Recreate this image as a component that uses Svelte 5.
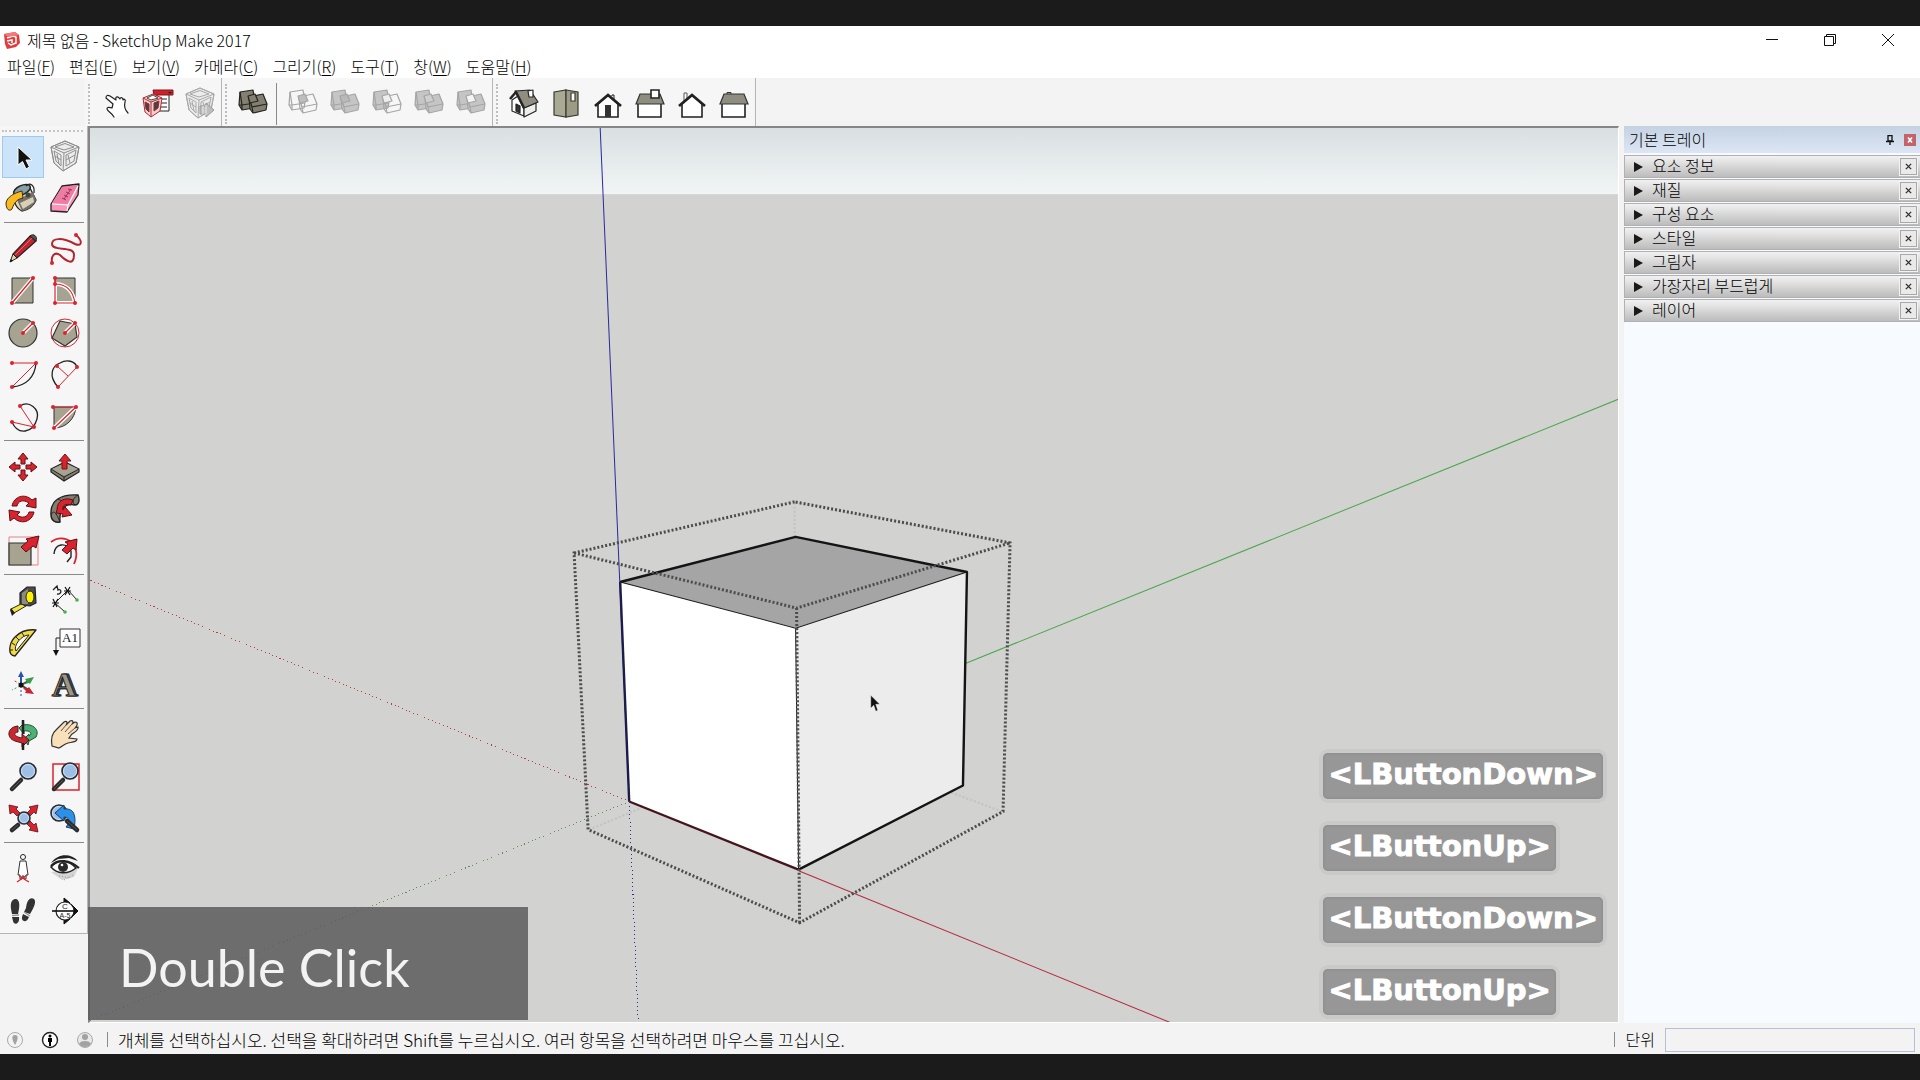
<script lang="ts">
	type Tool = { id: string; label: string; off?: boolean };

	const menus = [
		{ label: '파일', key: 'F' },
		{ label: '편집', key: 'E' },
		{ label: '보기', key: 'V' },
		{ label: '카메라', key: 'C' },
		{ label: '그리기', key: 'R' },
		{ label: '도구', key: 'T' },
		{ label: '창', key: 'W' },
		{ label: '도움말', key: 'H' },
	];

	const bars: Tool[][][] = [
		[[
			{ id: 'interact', label: '상호 작용' },
			{ id: 'options',  label: '구성 요소 옵션' },
			{ id: 'attrs',    label: '구성 요소 속성', off: true },
		]],
		[
			[{ id: 'shell', label: '외부 셸' }],
			[
				{ id: 'intersect', label: '교차' },
				{ id: 'union',     label: '결합' },
				{ id: 'subtract',  label: '빼기' },
				{ id: 'trim',      label: '트림' },
				{ id: 'split',     label: '분할' },
			],
		],
		[[
			{ id: 'iso',   label: '등각' },
			{ id: 'top',   label: '맨 위' },
			{ id: 'front', label: '앞' },
			{ id: 'right', label: '오른쪽' },
			{ id: 'back',  label: '뒤' },
			{ id: 'left',  label: '왼쪽' },
		]],
	];

	const palette: Tool[][] = [
		[
			{ id: 'select', label: '선택' },        { id: 'component', label: '구성 요소 만들기' },
			{ id: 'paint',  label: '페인트 통' },   { id: 'eraser',    label: '지우개' },
		],
		[
			{ id: 'line',    label: '선' },         { id: 'freehand', label: '프리핸드' },
			{ id: 'rect',    label: '직사각형' },   { id: 'rotrect',  label: '회전된 직사각형' },
			{ id: 'circle',  label: '원' },         { id: 'polygon',  label: '다각형' },
			{ id: 'arc',     label: '호' },         { id: 'arc2',     label: '2점 호' },
			{ id: 'arc3',    label: '3점 호' },     { id: 'pie',      label: '파이' },
		],
		[
			{ id: 'move',   label: '이동' },        { id: 'pushpull', label: '밀기/끌기' },
			{ id: 'rotate', label: '회전' },        { id: 'follow',   label: '따라가기' },
			{ id: 'scale',  label: '배율' },        { id: 'offset',   label: '오프셋' },
		],
		[
			{ id: 'tape',       label: '줄자' },    { id: 'dimension', label: '치수' },
			{ id: 'protractor', label: '각도기' },  { id: 'text',      label: '텍스트' },
			{ id: 'axes',       label: '축' },      { id: 'text3d',    label: '3D 텍스트' },
		],
		[
			{ id: 'orbit',   label: '궤도' },       { id: 'pan',        label: '이동 보기' },
			{ id: 'zoom',    label: '확대/축소' },  { id: 'zoomwindow', label: '창 확대/축소' },
			{ id: 'extents', label: '범위 확대' },  { id: 'previous',   label: '이전' },
		],
		[
			{ id: 'camera', label: '카메라 배치' }, { id: 'look',    label: '둘러보기' },
			{ id: 'walk',   label: '걷기' },        { id: 'section', label: '단면' },
		],
	];

	const trays = ['요소 정보', '재질', '구성 요소', '스타일', '그림자', '가장자리 부드럽게', '레이어'];
	const keys = ['LButtonDown', 'LButtonUp', 'LButtonDown', 'LButtonUp'];

	let active = $state('select');
	let unit = $state('');

	const red = '#d9232e';
	const dot = (x: number, y: number) => `<circle cx="${x}" cy="${y}" r="2" fill="${red}"/>`;

	// two overlapping solids, shared by every boolean tool
	const solids = (fill: string, line: string, a = true, b = true, mid = '') => `
		<g stroke="${line}" stroke-width="1.2" stroke-linejoin="round">
			<path fill="${a ? fill : 'none'}" d="M8 9 21 7 23 19 22 25 10 27 7 22Z"/>
			<path fill="none" d="M8 9 10 22 7 22M10 22 23 20M10 22V27"/>
			<path fill="${b ? fill : 'none'}" d="M17 14 31 11 35 21 34 27 21 30 18 26Z"/>
			<path fill="none" d="M17 14 20 24 35 21M20 24 21 30"/>
			<path fill="${mid || 'none'}" d="M16 13 23 11 26 18 18 20Z"/>
		</g>`;

	const lens = (x: number, y: number, r: number) =>
		`<circle cx="${x}" cy="${y}" r="${r}" fill="#9dbfe6" stroke="#2b2b2f" stroke-width="1.6"/>
		<circle cx="${x}" cy="${y}" r="${r - 1.5}" fill="none" stroke="#c9def4" stroke-width="1"/>`;

	const handle = (d: string) =>
		`<path d="${d}" stroke="#2b2b2b" stroke-width="4.5" stroke-linecap="round"/><path d="${d}" stroke="#555" stroke-width="1"/>`;

	const frame = `
		<path d="M7 11 21 5 35 11 32 27 19 35 10 27Z" fill="#ececec"/>
		<path d="M7 11 21 5 35 11 20 17ZM11 11 21 7.500 30 11 20 14ZM7 11 10 27 19 35 20 17M35 11 32 27 19 35M10 15 17 19V30L12 25ZM22 19 32 14 30 25 22 30ZM13 18 15 28M11 20 17 24M24 19 26 27M22 24 31 19"/>`;

	const icons: Record<string, string> = {
		interact: `<path d="M19 34C17 30 13 29 12 26 12 24 14 24 17 25L18 21 11 15C11 12 13 12 15 13L21 17C20 13 23 13 25 16 25 14 28 14 28 17 29 15 31 17 30 19 29 23 30 27 33 30" fill="#fff" stroke="#222" stroke-width="1.2" stroke-linejoin="round" stroke-linecap="round"/>`,
		options: `<path d="M20 9H32V28H22Z" fill="#fff" stroke="#222"/><path d="M16 7H36V12H17Z" fill="#c9222d" stroke="#8b1219"/><path d="M31 9H35L33 11Z" fill="#222"/><path d="M24 16H30M24 20H30M24 24H30" stroke="#222"/>
			<path d="M6 15 16 11 25 15 23 28 14 34 8 29Z" fill="#f2d0d0" stroke="#b92832"/><path d="M6 15 14 19 25 15M14 19 14 34" stroke="#b92832"/><path d="M8 19 12 21V29L9 26ZM17 20 22 18 21 25 17 28Z" fill="#444" stroke="#8f2a31"/><path d="M10 15 16 12 21 15 14 17Z" fill="#fff" stroke="#444"/>`,
		attrs: `<g fill="none" stroke="#a9a9a9">${frame}</g><path d="M21 23H27V20L35 27 27 34V31H21Z" fill="#bdbdbd" stroke="#999"/><path d="M24 23V31M27 22V32" stroke="#eee"/>`,
		shell: solids('#848071', '#24241f', true, true, '#848071'),
		intersect: solids('#c5c5c5', '#a5a5a5', false, false, '#bdbdbd'),
		union: solids('#c5c5c5', '#a5a5a5', true, true, '#b9b9b9'),
		subtract: solids('#c5c5c5', '#a5a5a5', true, false, '#eee'),
		trim: solids('#c5c5c5', '#a5a5a5', true, true, '#cfcfcf'),
		split: solids('#c5c5c5', '#a5a5a5', true, true, '#f4f4f4'),
		iso: `<g stroke="#252525" stroke-width="1.2" stroke-linejoin="round"><path d="M9 17 15 13 21 26V33L9 28Z" fill="#fff"/><path d="M21 25 33 20V28L21 34Z" fill="#eee"/><path d="M12 8 27 7 35 19 21 25Z" fill="#8e8d7f"/><path d="M7 16 13 9 21 25" fill="none" stroke-width="2.600"/><path d="M13 21 17 23V30L13 28Z" fill="#333"/><path d="M25 8 30 7V14L26 14Z" fill="#fff"/></g>`,
		top: `<g stroke="#3a3a32" stroke-width="1.2"><path d="M9 9 21 7V34L9 32Z" fill="#aaa993"/><path d="M21 7 33 9V32L21 34Z" fill="#9c9b85"/><path d="M26 10 30 10V18L26 18Z" fill="#fff"/></g>`,
		front: `<path d="M11 21V34H31V21L21 12Z" fill="#fff" stroke="#222" stroke-width="1.6"/><path d="M8 23 21 12 34 23" fill="none" stroke="#222" stroke-width="2.800"/><path d="M18 22H24V34H18Z" fill="#333"/><path d="M25 13V12H27V16" stroke="#222" fill="none"/>`,
		right: `<path d="M9 20H32V34H9Z" fill="#fff" stroke="#222" stroke-width="1.6"/><path d="M11 11H31L35 21H7Z" fill="#8e8d7f" stroke="#333" stroke-width="1.2"/><path d="M22 7H30V15H22Z" fill="#fff" stroke="#222" stroke-width="1.6"/>`,
		back: `<path d="M13 18V10H16V17" fill="#fff" stroke="#555"/><path d="M11 21V34H31V21L21 12Z" fill="#fff" stroke="#222" stroke-width="1.6"/><path d="M8 23 21 12 34 23" fill="none" stroke="#222" stroke-width="2.800"/>`,
		left: `<path d="M9 20H32V34H9Z" fill="#fff" stroke="#222" stroke-width="1.6"/><path d="M14 11V9.500H18V11" fill="#ccc" stroke="#333"/><path d="M11 11H31L35 21H7Z" fill="#8e8d7f" stroke="#333" stroke-width="1.2"/>`,
		select: `<path d="M16 11V29L20.500 25.500 24 33 27.500 31 24 24H30Z" fill="#111" stroke="#fff" stroke-width="1"/>`,
		component: `<g fill="none" stroke="#8f8f8f">${frame}</g>`,
		paint: `<path d="M13 12C10 20 13 30 20 33 26 32 32 28 34 22L27 8Z" fill="#ded9bd" stroke="#222" stroke-width="1.3"/><path d="M15 22 31 14 34 22C32 28 26 32 20 33Z" fill="#76706a"/><path d="M18 25 31 19 32 24 21 31Z" fill="#d8d0b2"/><ellipse cx="20" cy="12" rx="9" ry="4.500" transform="rotate(-25 20 12)" fill="#87a0a6" stroke="#222" stroke-width="1.5"/><path d="M24 8C28 4 33 7 32 15" fill="none" stroke="#222" stroke-width="1.2"/><circle cx="26" cy="17" r="2.500" fill="#444"/><path d="M20 13C12 15 5 19 4 25 4 31 7 34 10 31 12 25 15 21 21 20Z" fill="#f8b921" stroke="#39301c"/>`,
		eraser: `<path d="M7 26 18 8 35 6 34 17 23 34 7 33Z" fill="#fb94b8" stroke="#222" stroke-width="1.3" stroke-linejoin="round"/><path d="M8 25 18 9 34 7 24 26Z" fill="#ee7da4"/><path d="M8 26 24 27 23 33M24 27 34 8" stroke="#fff" stroke-width="1.2" fill="none"/><path d="M20 21 27 11M18 20 22 22M20 17 24 19M22 14 26 16M24 11 28 12" stroke="#9c3259" stroke-width="1"/>`,
		line: `<path d="M28 8 34 13 15 30 11 26Z" fill="#be2630" stroke="#222" stroke-width="1.2"/><path d="M28 8C31 5 36 8 34 13Z" fill="#555" stroke="#222"/><path d="M11 26 8 34 15 30Z" fill="#e7d6ac" stroke="#222"/><path d="M8 34 9 31 11 33Z" fill="#111"/><path d="M13 27 30 10" stroke="#ef6067"/>`,
		freehand: `<path d="M32 7C39 13 38 19 31 16C18 9 8 10 8 16C8 24 30 17 30 27C30 39 21 32 16 27C10 23 7 29 8 34" fill="none" stroke="#b3262f" stroke-width="2"/>${dot(32, 7)}${dot(8, 35)}`,
		rect: `<path d="M10 8H31V33H10Z" fill="#a6a491" stroke="#333"/><path d="M10 33 31 8" stroke="#fff" stroke-width="4"/><path d="M10 33 31 8" stroke="${red}" stroke-width="1.3"/>${dot(10, 33)}${dot(31, 8)}`,
		rotrect: `<path d="M11 8H31V33H11Z" fill="#a6a491" stroke="#333"/><path d="M11 14C22 14 29 21 31 33H11Z" fill="none" stroke="#fff" stroke-width="4"/><path d="M11 8V33H31C29 21 22 14 11 14" fill="none" stroke="${red}" stroke-width="1.2"/>${dot(11, 8)}${dot(11, 14)}${dot(11, 33)}${dot(31, 33)}`,
		circle: `<circle cx="21" cy="21" r="14" fill="#a6a491" stroke="#333" stroke-width="1.2"/><path d="M21 21 31 11" stroke="#fff" stroke-width="4"/><path d="M21 21 31 11" stroke="${red}" stroke-width="1.3"/>${dot(21, 21)}${dot(31, 11)}`,
		polygon: `<circle cx="21" cy="21" r="14" fill="#fff" stroke="${red}"/><path d="M16 9 31 12 33 25 21 34 8 26Z" fill="#a6a491" stroke="#333" stroke-width="1.2"/><path d="M21 21 31 11" stroke="#fff" stroke-width="4"/><path d="M21 21 31 11" stroke="${red}" stroke-width="1.3"/>${dot(21, 21)}${dot(31, 11)}`,
		arc: `<path d="M34 9C33 23 24 32 10 33" fill="none" stroke="#222" stroke-width="1.3"/><path d="M10 9H34L10 33" fill="none" stroke="${red}"/>${dot(10, 9)}${dot(34, 9)}${dot(10, 33)}`,
		arc2: `<path d="M14 33C4 22 8 12 16 9 23 5 31 7 33 13" fill="none" stroke="#222" stroke-width="1.3"/><path d="M33 13 14 33M13 12 24 22" stroke="${red}"/>${dot(13, 12)}${dot(33, 13)}${dot(14, 33)}`,
		arc3: `<path d="M18 10C27 4 38 13 35 23 31 37 16 40 10 26" fill="none" stroke="#222" stroke-width="1.3"/><path d="M18 10 32 31 10 26" fill="none" stroke="${red}"/>${dot(18, 10)}${dot(32, 31)}${dot(10, 26)}`,
		pie: `<path d="M10 11H32C31 23 22 32 10 32Z" fill="#a6a491" stroke="#333"/><path d="M10 32 32 11" stroke="#fff" stroke-width="4"/><path d="M9 11H32L10 32" fill="none" stroke="${red}" stroke-width="1.2"/>${dot(9, 11)}${dot(32, 11)}${dot(10, 32)}`,
		move: `<path d="M21 7 26 13H23V18H19V13H16ZM21 35 16 29H19V24H23V29H26ZM7 21 13 16V19H18V23H13V26ZM35 21 29 26V23H24V19H29V16Z" fill="${red}" stroke="#5c1216"/>`,
		pushpull: `<path d="M7 23 21 16 35 23V26L20 35 7 26Z" fill="#827f71" stroke="#222" stroke-width="1.2"/><path d="M7 23 20 31 35 23M20 31V35" fill="none" stroke="#222"/><path d="M8 23 21 17 34 23 20 30Z" fill="#a6a491"/><path d="M21 8 27 15H23V23H18V15H15Z" fill="${red}" stroke="#6f161b"/>`,
		rotate: `<path d="M10 18C12 8 23 5 30 12L34 10V20L24 18 27 15C21 11 16 13 15 18Z" fill="${red}" stroke="#5c1216"/><path d="M32 24C30 34 19 37 12 30L8 33 7 22 18 24 15 27C20 31 26 29 27 24Z" fill="${red}" stroke="#5c1216"/>`,
		follow: `<path d="M7 27C6 12 17 6 34 7 36 12 35 17 31 17 20 15 15 22 16 34 12 35 7 33 7 27Z" fill="#827f71" stroke="#222" stroke-width="1.4"/><path d="M7 27C10 20 13 27 16 34M14 11C18 13 20 14 20 17M31 17C27 14 30 9 34 7" fill="none" stroke="#222"/><path d="M13 22C13 12 21 9 29 12L27 17C21 15 18 18 19 22L21 19 28 27 18 29 19 26 12 25Z" fill="${red}" stroke="#5c1216"/>`,
		scale: `<path d="M7 7H36V35H7Z" fill="none" stroke="#e88286"/><path d="M7 13H29V35H7Z" fill="#a6a491" stroke="#333" stroke-width="1.2"/><path d="M37 6 34 18 31 16 24 22 19 17 26 11 24 9Z" fill="${red}" stroke="#5c1216"/>`,
		offset: `<path d="M10 24C11 13 22 12 27 21V27L23 32" fill="none" stroke="#222" stroke-width="1.4"/><path d="M7 12C20 2 39 14 30 34" fill="none" stroke="${red}" stroke-width="1.8"/><path d="M33 9 32 20 29 18 23 24 18 20 24 14 21 12Z" fill="${red}" stroke="#5c1216"/>`,
		tape: `<path d="M18 13 25 7 33 7 34 23 28 26 18 25Z" fill="#4c4c4c" stroke="#222" stroke-width="1.2"/><path d="M20 13 26 9 26 24 20 24Z" fill="#8d8b82"/><ellipse cx="28" cy="17" rx="4" ry="6" fill="#fff100" stroke="#222"/><path d="M19 24 24 26 12 33 9 29Z" fill="#f4e53b" stroke="#222"/><path d="M9 28 13 33 10 36 8 30Z" fill="#222"/>`,
		dimension: `<path d="M11 23 24 10M24 10 33 20M11 23 21 32" stroke="#222"/><path d="M8 23H15M9 19 13 27M14 19 9 27M20 11H27M21 7 26 15M26 7 21 15" stroke="#111" stroke-width="1.2"/><circle cx="33" cy="20" r="1.800" fill="#44b34b"/><circle cx="21" cy="32" r="1.800" fill="#44b34b"/><path d="M9 10 13 6 14 10C18 8 18 15 13 14" fill="none" stroke="#222" stroke-width="1.3"/>`,
		protractor: `<path d="M34 8 13 34C5 34 7 21 13 15 19 9 26 7 34 8Z" fill="#f1d943" stroke="#222" stroke-width="1.3" stroke-linejoin="round"/><path d="M27 13 14 29C11 24 19 13 27 13Z" fill="#fff" stroke="#222"/><path d="M8 28 11 28M10 21 13 23M14 15 17 18M20 11 22 14" stroke="#222"/>`,
		text: `<path d="M16 7H36V25H16Z" fill="#fff" stroke="#333"/><text x="26" y="20" text-anchor="middle" font-family="Liberation Serif, serif" font-size="13" fill="#222">A1</text><path d="M16 16H12V29" fill="none" stroke="#222"/><path d="M9 28H15L12 34Z" fill="#111"/>`,
		axes: `<path d="M19 21V12M19 21 28 16M19 21 27 26" stroke="#444" stroke-width="1.6"/><path d="M18 13H16L19 7 22 13H20V20H18Z" fill="#2955a5"/><path d="M25 18 23 15 32 13 28 20 27 19 20 21Z" fill="#3a9b4c"/><path d="M25 25 27 23 32 30 23 29 24 27 20 23Z" fill="#c42830"/><path d="M19 22V33" stroke="#2955a5" stroke-dasharray="2 2"/><path d="M18 20 11 16" stroke="#c42830" stroke-dasharray="2 2"/><path d="M18 22 10 26" stroke="#3a9b4c" stroke-dasharray="2 2"/><circle cx="19" cy="21" r="2.500" fill="#111"/>`,
		text3d: `<g font-family="Liberation Serif, serif" font-weight="700" font-size="34" text-anchor="middle" stroke="#222"><text x="22" y="32" fill="#4c4b46">A</text><text x="20" y="32" fill="#99968a">A</text></g>`,
		orbit: `<path d="M21 11C31 9 38 16 34 23L27 27 26 31 22 25 27 20V22C31 20 28 16 22 17V20L17 14 22 9Z" fill="#4eb077" stroke="#174f2b"/><path d="M16 12C5 13 4 24 13 27L20 29V33L27 26 20 20V24C13 23 10 19 16 18Z" fill="#c82832" stroke="#5c1216"/><path d="M21 6V20M21 29V36" stroke="#222" stroke-width="2.500"/>`,
		pan: `<path d="M8 32C7 26 7 20 12 16L20 8C23 6 24 9 22 11L26 7C29 6 30 8 28 10L31 8C34 8 34 11 31 14L34 13C35 16 31 18 28 20L25 24 33 25C33 28 29 28 24 29 20 30 18 33 15 34Z" fill="#f9dfba" stroke="#333" stroke-width="1.2"/><path d="M22 11 17 17M28 10 21 18M31 14 24 20" stroke="#555" fill="none"/>`,
		zoom: handle('M10 33 19 24') + lens(26, 15, 8),
		zoomwindow: `<path d="M9 8H35V34H9Z" fill="none" stroke="${red}" stroke-width="1.5"/>` + handle('M10 33 19 24') + lens(26, 15, 8),
		extents: `<g fill="${red}" stroke="#5c1216" stroke-width=".8"><path d="M7 7 16 9 14 11 18 15 15 18 11 14 8 16Z"/><path d="M36 7 34 16 32 14 28 18 25 15 29 11 27 9Z"/><path d="M36 34 27 32 29 30 25 26 28 23 32 27 34 25Z"/></g>` + handle('M10 32 16 27') + lens(22, 20, 6),
		previous: lens(15, 15, 8) + `<path d="M11 15 20 7V11C29 10 33 16 30 31L22 29 25 25C25 21 24 19 20 19V23Z" fill="#2b91e8" stroke="#1b3c62"/>` + handle('M23 23 33 32'),
		camera: `<circle cx="21" cy="9" r="2.500" fill="#fff" stroke="#222"/><path d="M18 13 24 13 26 27 24 27V31H22V28H20V31H18V27H16Z" fill="#fff" stroke="#333"/><path d="M15 34 25 27M27 34 17 28" stroke="${red}" stroke-width="1.2"/>`,
		look: `<path d="M7 15C14 5 27 5 34 13L25 10 14 11Z" fill="#222"/><path d="M7 24C16 22 28 24 35 18L30 29 18 32Z" fill="#d4d4d4"/><path d="M7 19C13 12 24 11 32 20 23 27 13 26 7 19Z" fill="#fff" stroke="#222" stroke-width="1.5"/><path d="M7 18C14 10 26 12 35 20" fill="none" stroke="#222" stroke-width="2"/><circle cx="19" cy="19" r="5" fill="#2a2a2a"/><circle cx="18" cy="17" r="1.300" fill="#fff"/><path d="M15 28 27 30M20 32 29 27" stroke="#999" stroke-dasharray="1 2"/>`,
		walk: `<path d="M9 19C8 11 11 9 14 9 18 10 18 16 16 24L10 24ZM10 27H17C18 34 12 36 11 31Z" fill="#333"/><path d="M24 18C25 9 29 7 32 9 35 12 31 19 28 24L22 22ZM21 24 27 27C25 33 19 32 20 27Z" fill="#333"/><path d="M10 25.500 17 25M22 22 28 26" stroke="#999" stroke-width="1.5"/>`,
		section: `<path d="M20 12V8L26 13ZM20 30V34L26 29ZM27 14 34 21 27 28Z" fill="#111" stroke="#111"/><circle cx="21" cy="21" r="9" fill="#fff" stroke="#222" stroke-width="1.2"/><path d="M8 21H34" stroke="#111" stroke-width="1.6"/><text x="21" y="19" text-anchor="middle" font-family="Liberation Sans, sans-serif" font-size="8" fill="#222">C</text><text x="21" y="28" text-anchor="middle" font-family="Liberation Sans, sans-serif" font-size="7" fill="#222">A-5</text>`,
	};
</script>

{#snippet toolButton(tool: Tool)}
	<button
		class="tool"
		class:active={active === tool.id}
		disabled={tool.off}
		aria-label={tool.label}
		onclick={() => (active = tool.id)}
	>
		<svg viewBox="0 0 42 42" fill="none">{@html icons[tool.id]}</svg>
	</button>
{/snippet}

<div class="screen">
	<div class="window">
		<header class="titlebar">
			<svg class="logo" viewBox="0 0 18 18">
				<path d="M1 3 12 1 16 4 17 12 13 16 4 18 2 13Z" fill="#e23b3f" />
				<path d="M4 7 10 5 13 6V12L8 14 5 12M4 10 9 9V12" fill="none" stroke="#fff" stroke-width="1.5" />
				<path d="M1 3 12 1 16 4 5 6Z" fill="#f4797a" />
			</svg>
			<h1>제목 없음 - SketchUp Make 2017</h1>
			<div class="controls">
				<button aria-label="최소화"><svg viewBox="0 0 14 14"><path d="M1 6.5H13" /></svg></button>
				<button aria-label="이전 크기로"><svg viewBox="0 0 14 14"><path d="M1.5 3.500H10.500V12.500H1.500ZM3.500 3.500V1.500H12.500V10.500H10.500" /></svg></button>
				<button aria-label="닫기"><svg viewBox="0 0 14 14"><path d="M1 1 13 13M13 1 1 13" /></svg></button>
			</div>
		</header>

		<nav class="menubar">
			{#each menus as menu (menu.key)}
				<button>{menu.label}(<u>{menu.key}</u>)</button>
			{/each}
		</nav>

		<div class="toolbars">
			{#each bars as groups}
				<div class="bar">
					<span class="grip"></span>
					{#each groups as group}
						<div class="group">
							{#each group as tool (tool.id)}
								{@render toolButton(tool)}
							{/each}
						</div>
					{/each}
				</div>
			{/each}
		</div>

		<div class="workspace">
			<aside class="side">
				<div class="palette">
					{#each palette as group}
						<div class="palette-group">
							{#each group as tool (tool.id)}
								{@render toolButton(tool)}
							{/each}
						</div>
					{/each}
				</div>
			</aside>

			<main class="viewport">
				<svg class="scene" viewBox="91 129 1527 892" preserveAspectRatio="xMinYMin slice">
					<defs>
						<linearGradient id="sky" x1="0" y1="0" x2="0" y2="1">
							<stop offset="0" stop-color="#d9dfe1" />
							<stop offset="1" stop-color="#f1f5f6" />
						</linearGradient>
					</defs>
					<rect x="90" y="128" width="1530" height="67" fill="url(#sky)" />

					<!-- Axes: solid on the positive side, dotted behind the origin -->
					<g fill="none" stroke-width="1">
						<path d="M600 128 629 801" stroke="#2a2a9c" />
						<path d="M965 663 1620 398" stroke="#4ca64c" />
						<path d="M798 870 1170 1022" stroke="#b5283c" />
						<g stroke-dasharray="1 3" shape-rendering="crispEdges">
							<path d="M629 801 90 580" stroke="#c03a44" />
							<path d="M629 801 90 1020" stroke="#5c8f5c" />
							<path d="M629 801 638 1021" stroke="#2a2a9c" />
						</g>
						<path d="M794 503V536M589 829 640 808M1001 811 950 792" stroke="#c2c2c0" stroke-width="2" stroke-dasharray="2 2" />
					</g>

					<!-- Cube -->
					<path d="M620 582 795 537 966 572 795 628Z" fill="#a6a5a6" />
					<path d="M620 582 795 628 798 869 629 801Z" fill="#fff" />
					<path d="M795 628 966 572 962 785 798 869Z" fill="#ececec" />
					<path d="M620 582 795 628 966 572M795 628 798 869" fill="none" stroke="#1a1a1a" stroke-width="1" />
					<path d="M620 582 795 537 966 572 962 785 798 869" fill="none" stroke="#141414" stroke-width="2.400" stroke-linejoin="round" />
					<path d="M620 582 629 801" stroke="#1b1b4c" stroke-width="2.400" />
					<path d="M629 801 798 869" stroke="#45141c" stroke-width="2.400" />

					<!-- Bounding box of the open group -->
					<path
						d="M794 502 574 553 588 829 799 922 1002 811 1009 543ZM574 553 796 608 1009 543M796 608 799 922"
						fill="none" stroke="#4c4c4c" stroke-width="3" stroke-dasharray="2 2"
					/>
					<path d="M870 695V708L873 705 875 711 877 710 875 704H879Z" fill="#111" stroke="#fff" stroke-width=".4" />
				</svg>

				<div class="caption">Double Click</div>
				<div class="keys">
					{#each keys as key}
						<kbd>&lt;{key}&gt;</kbd>
					{/each}
				</div>
			</main>

			<aside class="tray">
				<header class="tray-head">
					<h2>기본 트레이</h2>
					<button aria-label="고정"><svg viewBox="0 0 9 10"><path d="M2 .5H6V6H2ZM6 .5V6M0 6.500H8M4 6V10" fill="none" stroke="#111" stroke-width="1.3" /></svg></button>
					<button class="close" aria-label="트레이 닫기"><svg viewBox="0 0 12 12"><path d="M4 3.500 8 8.500M8 3.500 4 8.500" stroke="#fff" stroke-width="1.6" /></svg></button>
				</header>
				{#each trays as tray (tray)}
					<section class="panel">
						<button class="panel-title">
							<svg viewBox="0 0 9 10"><path d="M0 0 9 5 0 10Z" fill="#1a1a1a" /></svg>
							<span>{tray}</span>
						</button>
						<button class="panel-close" aria-label="{tray} 닫기">
							<svg viewBox="0 0 8 8"><path d="M1 1 7 7M7 1 1 7" stroke="#333" stroke-width="1.6" /></svg>
						</button>
					</section>
				{/each}
			</aside>
		</div>

		<footer class="status">
			<button aria-label="위치 정보">
				<svg viewBox="0 0 18 18"><circle cx="9" cy="9" r="7.500" fill="none" stroke="#aaa" /><path d="M9 4C5 4 6 9 9 14 12 9 13 4 9 4Z" fill="#a2a2a2" /></svg>
			</button>
			<button aria-label="크레디트">
				<svg viewBox="0 0 18 18"><circle cx="9" cy="9" r="7.500" fill="#fff" stroke="#222" stroke-width="1.4" /><circle cx="9" cy="5" r="1.500" /><path d="M7 7H11V11H10V15H8V11H7Z" /></svg>
			</button>
			<button aria-label="로그인">
				<svg viewBox="0 0 18 18"><circle cx="9" cy="9" r="7.500" fill="#e8e8e8" stroke="#aaa" /><circle cx="9" cy="6" r="3" fill="#a2a2a2" /><path d="M3 13C4 9 14 9 15 13 12 17 6 17 3 13Z" fill="#a2a2a2" /></svg>
			</button>
			<p>개체를 선택하십시오. 선택을 확대하려면 Shift를 누르십시오. 여러 항목을 선택하려면 마우스를 끄십시오.</p>
			<div class="measure">
				<label for="unit">단위</label>
				<input id="unit" type="text" bind:value={unit} />
			</div>
		</footer>
	</div>
</div>

<style>
	:global(body) {
		background: #1b1b1b;
	}

	.screen {
		display: flex;
		height: 100vh;
		padding: 26px 0;
		box-sizing: border-box;
		background: #1b1b1b;
		color: #000;
		font-family: 'Noto Sans CJK KR', sans-serif;
		font-size: 16px;
		font-weight: 300;
		line-height: 20px;
	}

	.window {
		display: flex;
		flex-direction: column;
		flex: 1;
		min-width: 0;
		background: #f3f3f3;
	}

	button {
		border: 0;
		padding: 0;
		background: none;
		color: inherit;
		font: inherit;
		display: flex;
		align-items: center;
		justify-content: center;
	}

	h1, h2, p {
		margin: 0;
		font-size: inherit;
		font-weight: inherit;
	}

	/* Title and menu */
	.titlebar {
		display: flex;
		align-items: center;
		gap: 6px;
		height: 28px;
		padding-left: 3px;
		background: #fff;
	}

	.logo {
		width: 18px;
		height: 18px;
	}

	.controls {
		display: flex;
		margin-left: auto;
		padding-right: 3px;
	}

	.controls button {
		width: 58px;
		height: 28px;
	}

	.controls svg {
		width: 14px;
		height: 14px;
		fill: none;
		stroke: #111;
	}

	.menubar {
		display: flex;
		gap: 14px;
		height: 24px;
		padding: 0 7px;
		background: #fff;
	}

	.menubar u {
		text-underline-offset: 2px;
	}

	/* Toolbars */
	.toolbars {
		display: flex;
		height: 48px;
		padding-left: 85px;
	}

	.bar {
		display: flex;
		align-items: center;
		padding: 4px 0 0;
		border-right: 1px solid #b5b5b5;
		background: #f6f6f6;
	}

	.grip {
		align-self: stretch;
		margin: 2px 5px 2px 3px;
		border-left: 2px dotted #bdbdbd;
	}

	.group {
		display: flex;
	}

	.group + .group {
		border-left: 1px solid #8a8a8a;
		margin-left: 2px;
		padding-left: 5px;
	}

	.tool {
		width: 42px;
		height: 42px;
		box-sizing: border-box;
	}

	.tool svg {
		width: 42px;
		height: 42px;
		flex: none;
	}

	.tool.active {
		border: 1px solid #9ccbf2;
		background: #cce4f9;
	}

	/* Workspace */
	.workspace {
		display: flex;
		flex: 1;
		min-height: 0;
	}

	.side {
		width: 88px;
	}

	.palette {
		padding: 10px 1px 1px 2px;
		border-right: 1px solid #b5b5b5;
		border-bottom: 1px solid #b5b5b5;
		background: #f6f6f6;
		position: relative;
	}

	.palette::before {
		content: '';
		position: absolute;
		inset: 4px 4px auto 2px;
		border-top: 2px dotted #c4c4c4;
	}

	.palette-group {
		display: grid;
		grid-template-columns: 42px 42px;
	}

	.palette-group + .palette-group::before {
		content: '';
		grid-column: 1 / -1;
		height: 1px;
		margin: 2px 2px 5px;
		background: #8a8a8a;
	}

	.viewport {
		position: relative;
		flex: 1;
		min-width: 0;
		border-style: solid;
		border-width: 2px 1px 1px 2px;
		border-color: #868686 #fff #fff #868686;
		background: #d2d2d0;
	}

	.scene {
		display: block;
		width: 100%;
		height: 100%;
	}

	.caption {
		position: absolute;
		left: -2px;
		bottom: 2px;
		width: 440px;
		height: 113px;
		box-sizing: border-box;
		padding-left: 31px;
		background: rgba(92, 92, 92, 0.86);
		color: #f3f3f3;
		font-family: Lato, sans-serif;
		font-size: 52px;
		font-weight: 400;
		line-height: 120px;
		white-space: nowrap;
	}

	.keys {
		position: absolute;
		right: 15px;
		bottom: 7px;
		display: flex;
		flex-direction: column;
		align-items: flex-start;
		gap: 26px;
	}

	kbd {
		padding: 0 5px 4px;
		border-radius: 5px;
		background: #979797;
		box-shadow: inset 0 0 3px #868686, 0 0 0 4px #cacac9;
		color: #fff;
		font-family: 'DejaVu Sans', sans-serif;
		font-size: 29px;
		font-weight: 700;
		line-height: 42px;
		-webkit-text-stroke: 1px #fff;
	}

	/* Tray */
	.tray {
		display: flex;
		flex-direction: column;
		gap: 1px;
		width: 296px;
		margin-left: 5px;
		background: #f7faff;
	}

	.tray-head {
		display: flex;
		align-items: center;
		gap: 9px;
		height: 27px;
		padding: 0 4px 0 5px;
		background: linear-gradient(#c5d2e2, #dce6f5);
	}

	.tray-head h2 {
		margin-right: auto;
		padding-bottom: 2px;
	}

	.tray-head svg {
		width: 9px;
		height: 10px;
	}

	.tray-head .close {
		width: 12px;
		height: 12px;
		background: #c4636b;
	}

	.tray-head .close svg {
		width: 12px;
		height: 12px;
	}

	.panel {
		display: flex;
		align-items: center;
		height: 23px;
		box-sizing: border-box;
		padding-right: 3px;
		border: 1px solid #b1b1b1;
		border-right: 0;
		background: linear-gradient(#f2f2f2, #bcbcbc);
	}

	.tray-head + .panel {
		margin-top: 1px;
	}

	.panel-title {
		flex: 1;
		justify-content: flex-start;
		gap: 9px;
		padding-left: 9px;
	}

	.panel-title span {
		padding-bottom: 3px;
	}

	.panel-title svg {
		width: 9px;
		height: 10px;
	}

	.panel-close {
		width: 17px;
		height: 17px;
		box-sizing: border-box;
		border: 1px solid #a8a8a8;
		outline: 1px solid #f3f3f3;
		background: #eaeaea;
	}

	.panel-close svg {
		width: 7px;
		height: 7px;
	}

	/* Status bar */
	.status {
		display: flex;
		align-items: center;
		gap: 17px;
		height: 31px;
		box-sizing: border-box;
		padding: 2px 5px 0 6px;
	}

	.status svg {
		width: 18px;
		height: 18px;
	}

	.status p {
		padding-left: 10px;
		margin-left: -4px;
		border-left: 1px solid #8a8a8a;
		font-size: 17px;
		line-height: 15px;
	}

	.measure {
		display: flex;
		align-items: center;
		gap: 10px;
		margin-left: auto;
	}

	.measure label {
		padding-left: 11px;
		border-left: 1px solid #8a8a8a;
		line-height: 15px;
	}

	.measure input {
		width: 250px;
		height: 24px;
		box-sizing: border-box;
		border: 1px solid #b9bfd3;
		background: #f3f3f3;
		font: inherit;
	}
</style>
